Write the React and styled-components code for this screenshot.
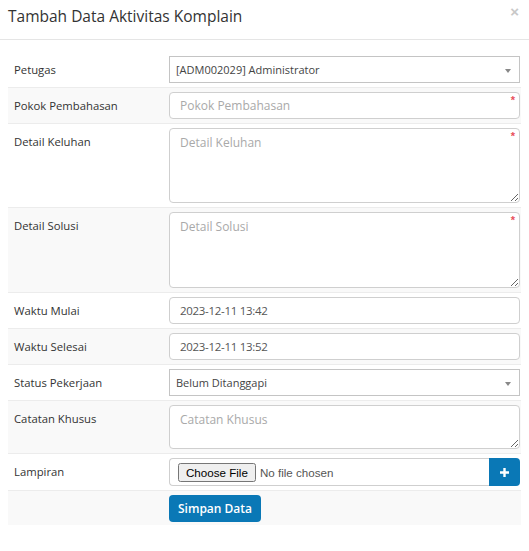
import React from "react";
import styled, { createGlobalStyle } from "styled-components";

const GlobalStyle = createGlobalStyle`
  html, body { margin: 0; padding: 0; background: #fff; }
  body { font-family: "Open Sans", "Noto Sans", sans-serif; color: #333; }
  * { box-sizing: border-box; }
`;

const Modal = styled.div`
  width: 529px;
  background: #fff;
`;

const Header = styled.div`
  height: 40px;
  display: flex;
  justify-content: space-between;
  align-items: flex-start;
  padding: 5px 10px 0 8px;
  border-bottom: 1px solid #e5e5e5;
`;

const Title = styled.h4`
  margin: 0;
  font-size: 15.5px;
  line-height: 22px;
  font-weight: 400;
  color: #333;
`;

const Close = styled.span`
  font-family: "Liberation Sans", Arial, sans-serif;
  font-size: 15px;
  line-height: 14px;
  font-weight: 700;
  color: #c8c8c8;
`;

const Body = styled.div`
  padding: 11px 8px 0 8px;
`;

const Row = styled.div`
  display: grid;
  grid-template-columns: 156px 1fr;
  border-top: 1px solid ${(p) => (p.$first ? "transparent" : "#ececec")};
  background: ${(p) => (p.$striped ? "#f9f9f9" : "#fff")};
`;

const LabelCell = styled.div`
  padding: 4px 6px;
  font-size: 11.3px;
  line-height: 27px;
  color: #333;
`;

const FieldCell = styled.div`
  padding: 4px 1px ${(p) => p.$pb || 4}px 5px;
  position: relative;
`;

const TextInput = styled.input`
  display: block;
  width: 100%;
  height: 27px;
  border: 1px solid #cfcfcf;
  border-radius: 4px;
  padding: 0 10px;
  font-family: "Open Sans", "Noto Sans", sans-serif;
  font-size: 12px;
  color: #555;
  background: #fff;
  outline: none;
  &::placeholder { color: #a9a9a9; }
`;

const ValueInput = styled(TextInput)`
  font-size: 11.5px;
  letter-spacing: -0.3px;
`;

const TextArea = styled.textarea`
  display: block;
  width: 100%;
  height: ${(p) => p.$h}px;
  border: 1px solid #cfcfcf;
  border-radius: 4px;
  padding: 6px 10px;
  font-family: "Open Sans", "Noto Sans", sans-serif;
  font-size: 12px;
  line-height: 16px;
  color: #555;
  background: #fff;
  outline: none;
  resize: vertical;
  &::placeholder { color: #a9a9a9; }
`;

const Required = styled.span`
  position: absolute;
  top: 7px;
  right: 6px;
  font-family: "Liberation Sans", Arial, sans-serif;
  font-size: 11px;
  line-height: 11px;
  font-weight: 700;
  color: #e8505b;
`;

const SelectBox = styled.div`
  height: 27px;
  display: flex;
  align-items: center;
  justify-content: space-between;
  border: 1px solid #c4c4c4;
  background: #fff;
  padding: 0 8px 0 6px;
  font-size: 11px;
  color: #444;
`;

const Caret = styled.span`
  width: 0;
  height: 0;
  border-left: 3.5px solid transparent;
  border-right: 3.5px solid transparent;
  border-top: 4px solid #888;
  margin-top: 2px;
`;

const InputGroup = styled.div`
  display: flex;
  height: 28px;
`;

const FileBox = styled.div`
  flex: 1;
  display: flex;
  align-items: center;
  border: 1px solid #cfcfcf;
  border-right: none;
  border-radius: 4px 0 0 4px;
  padding-left: 8px;
  background: #fff;
`;

const FileInput = styled.input`
  font-family: "Liberation Sans", Arial, sans-serif;
  font-size: 11.6px;
  color: #555;
`;

const AddButton = styled.button`
  width: 31px;
  border: none;
  border-radius: 0 4px 4px 0;
  background: #0a78b6;
  display: flex;
  align-items: center;
  justify-content: center;
  padding: 0;
`;

const SaveButton = styled.button`
  height: 27px;
  width: 92px;
  border: none;
  border-radius: 4px;
  background: #0a78b6;
  color: #fff;
  font-family: "Open Sans", "Noto Sans", sans-serif;
  font-size: 12px;
  font-weight: 600;
  padding: 0;
`;

const Plus = () => (
  <svg width="9" height="9" viewBox="0 0 9 9">
    <path d="M4.5 0.5v8M0.5 4.5h8" stroke="#fff" strokeWidth="2.4" strokeLinecap="square" />
  </svg>
);

export default function App() {
  return (
    <>
      <GlobalStyle />
      <Modal>
        <Header>
          <Title>Tambah Data Aktivitas Komplain</Title>
          <Close>×</Close>
        </Header>
        <Body>
          <Row $first>
            <LabelCell>Petugas</LabelCell>
            <FieldCell>
              <SelectBox>
                <span>[ADM002029] Administrator</span>
                <Caret />
              </SelectBox>
            </FieldCell>
          </Row>
          <Row $striped>
            <LabelCell>Pokok Pembahasan</LabelCell>
            <FieldCell>
              <TextInput placeholder="Pokok Pembahasan" />
              <Required>*</Required>
            </FieldCell>
          </Row>
          <Row>
            <LabelCell>Detail Keluhan</LabelCell>
            <FieldCell>
              <TextArea $h={75} placeholder="Detail Keluhan" />
              <Required>*</Required>
            </FieldCell>
          </Row>
          <Row $striped>
            <LabelCell>Detail Solusi</LabelCell>
            <FieldCell>
              <TextArea $h={76} placeholder="Detail Solusi" />
              <Required>*</Required>
            </FieldCell>
          </Row>
          <Row>
            <LabelCell>Waktu Mulai</LabelCell>
            <FieldCell>
              <ValueInput defaultValue="2023-12-11 13:42" />
            </FieldCell>
          </Row>
          <Row $striped>
            <LabelCell>Waktu Selesai</LabelCell>
            <FieldCell>
              <ValueInput defaultValue="2023-12-11 13:52" />
            </FieldCell>
          </Row>
          <Row>
            <LabelCell>Status Pekerjaan</LabelCell>
            <FieldCell>
              <SelectBox>
                <span>Belum Ditanggapi</span>
                <Caret />
              </SelectBox>
            </FieldCell>
          </Row>
          <Row $striped>
            <LabelCell>Catatan Khusus</LabelCell>
            <FieldCell>
              <TextArea $h={44} placeholder="Catatan Khusus" />
            </FieldCell>
          </Row>
          <Row>
            <LabelCell>Lampiran</LabelCell>
            <FieldCell>
              <InputGroup>
                <FileBox>
                  <FileInput type="file" />
                </FileBox>
                <AddButton type="button" aria-label="Tambah">
                  <Plus />
                </AddButton>
              </InputGroup>
            </FieldCell>
          </Row>
          <Row $striped>
            <LabelCell />
            <FieldCell $pb={3}>
              <SaveButton type="button">Simpan Data</SaveButton>
            </FieldCell>
          </Row>
        </Body>
      </Modal>
    </>
  );
}
